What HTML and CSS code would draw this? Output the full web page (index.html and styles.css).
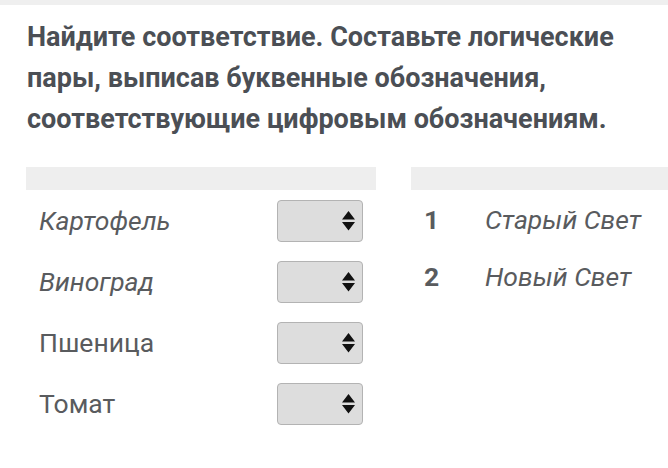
FILE: index.html
```html
<!DOCTYPE html>
<html lang="ru">
<head>
<meta charset="utf-8">
<link rel="stylesheet" href="styles.css">
</head>
<body>
<div class="topbar"></div>
<main class="content">
  <h1 class="question">Найдите соответствие. Составьте логические пары, выписав буквенные обозначения, соответствующие цифровым обозначениям.</h1>
  <div class="tables">
    <div class="col-left">
      <div class="head"></div>
      <div class="row"><span class="label it">Картофель</span><div class="sel"><svg width="13" height="20" viewBox="0 0 13 20"><path d="M6.5 0 L13 8.5 L0 8.5 Z M0 11 L13 11 L6.5 19.5 Z" fill="#111"/></svg></div></div>
      <div class="row"><span class="label it">Виноград</span><div class="sel"><svg width="13" height="20" viewBox="0 0 13 20"><path d="M6.5 0 L13 8.5 L0 8.5 Z M0 11 L13 11 L6.5 19.5 Z" fill="#111"/></svg></div></div>
      <div class="row"><span class="label">Пшеница</span><div class="sel"><svg width="13" height="20" viewBox="0 0 13 20"><path d="M6.5 0 L13 8.5 L0 8.5 Z M0 11 L13 11 L6.5 19.5 Z" fill="#111"/></svg></div></div>
      <div class="row"><span class="label">Томат</span><div class="sel"><svg width="13" height="20" viewBox="0 0 13 20"><path d="M6.5 0 L13 8.5 L0 8.5 Z M0 11 L13 11 L6.5 19.5 Z" fill="#111"/></svg></div></div>
    </div>
    <div class="col-right">
      <div class="head"></div>
      <div class="rrows">
        <div class="rrow"><span class="num">1</span><span class="label it">Старый Свет</span></div>
        <div class="rrow"><span class="num">2</span><span class="label it">Новый Свет</span></div>
      </div>
    </div>
  </div>
</main>
</body>
</html>
```
FILE: styles.css
```css
html, body {
  margin: 0;
  padding: 0;
  background: #fff;
  font-family: Roboto, "Noto Sans", sans-serif;
  overflow: hidden;
}
.topbar {
  height: 5px;
  background: #efefef;
}
.content {
  padding: 12px 0 0 27px;
}
.question {
  margin: 0;
  width: 620px;
  font-size: 27px;
  line-height: 41px;
  font-weight: 700;
  color: #4b4f55;
}
.tables {
  display: flex;
  gap: 35px;
  margin-top: 27px;
  margin-left: -1px;
}
.head {
  height: 23px;
  background: #eeeeee;
}
.col-left {
  width: 350px;
  flex: none;
}
.col-right {
  width: 257px;
  flex: none;
}
.row {
  height: 61px;
  display: flex;
  align-items: center;
  justify-content: space-between;
  padding: 0 13px;
}
.label {
  font-size: 26.5px;
  color: #595b5e;
  white-space: nowrap;
}
.it {
  font-style: italic;
}
.sel {
  box-sizing: border-box;
  width: 86px;
  height: 42px;
  background: #dddddd;
  border: 1.5px solid #b3b3b3;
  border-radius: 4px;
  display: flex;
  align-items: center;
  justify-content: flex-end;
  padding-right: 7px;
}
.rrows {
  padding-top: 1px;
}
.rrow {
  height: 57px;
  display: flex;
  align-items: center;
  padding-left: 13px;
}
.num {
  width: 61px;
  flex: none;
  font-size: 26.5px;
  font-weight: 700;
  color: #595b5e;
}
```
